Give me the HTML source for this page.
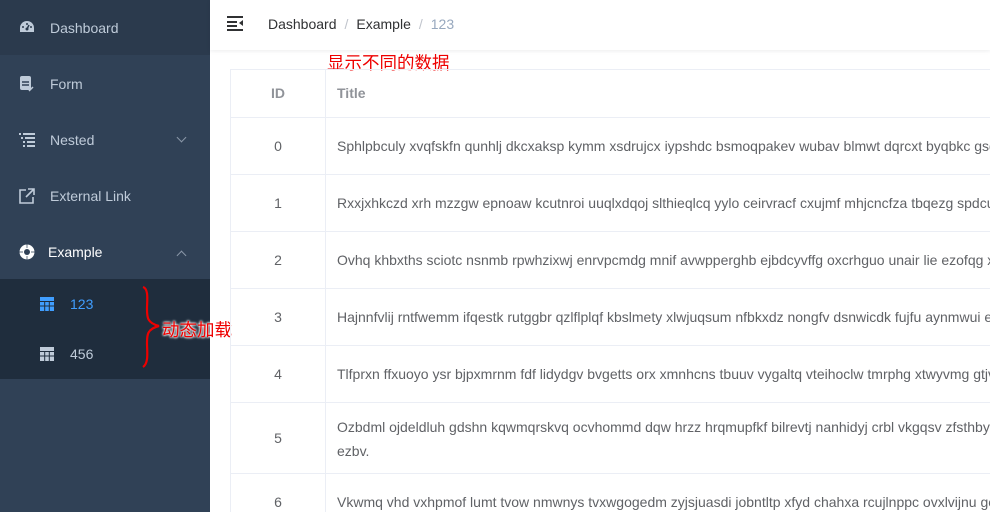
<!DOCTYPE html>
<html><head><meta charset="utf-8">
<style>
*{margin:0;padding:0;box-sizing:border-box}
html,body{width:990px;height:512px;overflow:hidden;background:#fff;font-family:"Liberation Sans","Noto Sans CJK SC",sans-serif}
.side{position:absolute;left:0;top:0;width:210px;height:512px;background:#304156}
.item{position:absolute;left:0;width:210px;height:56px;color:#bfcbd9;font-size:14px;line-height:56px}
.item .t{position:absolute;left:50px}
.item svg{position:absolute;left:19px;top:20px}
.sub{position:absolute;left:0;top:279px;width:210px;height:100px;background:#1f2d3d}
.arrow{position:absolute;left:178px;top:25px;width:7px;height:7px;border-right:1px solid #8a97a8;border-bottom:1px solid #8a97a8}
.head{position:absolute;left:210px;top:0;width:780px;height:50px;background:#fff;box-shadow:0 1px 4px rgba(0,21,41,.08)}
.bc{position:absolute;left:58px;top:16px;font-size:14px;color:#303133}
.bc .s{color:#c0c4cc;margin:0 8px}
.bc .l{color:#97a8be}
.wrap{position:absolute;left:230px;top:69px;width:760px;height:443px;overflow:hidden}
.tbl{width:900px;border-left:1px solid #ebeef5;border-top:1px solid #ebeef5}
.row{position:relative;border-bottom:1px solid #ebeef5;font-size:14px;color:#606266}
.row .id{position:absolute;left:0;top:0;bottom:0;width:95px;border-right:1px solid #ebeef5;text-align:center}
.row .tt{margin-left:95px;padding:0 11px;white-space:nowrap;line-height:23px}
.red{position:absolute;color:#e00;font-size:17.5px;white-space:nowrap;text-shadow:0 0 2px #fff,0 0 2px #fff,0 0 3px #fff}
</style></head><body>
<div class="side">
 <div class="item" style="top:0;height:55px;background:#2b3a4d">
  <svg width="16" height="14" viewBox="0 0 16 14"><path d="M8 1A7 7 0 0 0 1 8v4h14V8A7 7 0 0 0 8 1z" fill="#bfcbd9"/><circle cx="8" cy="9" r="1.5" fill="#2b3a4d"/><path d="M8 9l2-4" stroke="#2b3a4d" stroke-width="1.5"/><circle cx="4" cy="7" r="1" fill="#2b3a4d"/><circle cx="12" cy="7" r="1" fill="#2b3a4d"/><circle cx="8" cy="4" r="1" fill="#2b3a4d"/></svg>
  <span class="t">Dashboard</span></div>
 <div class="item" style="top:56px">
  <svg width="16" height="16" viewBox="0 0 16 16"><rect x="1" y="0" width="11" height="14" rx="2" fill="#bfcbd9"/><path d="M3 6h7M3 9h7" stroke="#304156" stroke-width="1.5"/><path d="M10 15l4-4" stroke="#bfcbd9" stroke-width="1.5"/></svg>
  <span class="t">Form</span></div>
 <div class="item" style="top:112px">
  <svg width="16" height="16" viewBox="0 0 16 16" fill="#bfcbd9"><rect x="0" y="1" width="2" height="2"/><rect x="4" y="1" width="12" height="2"/><rect x="2" y="5" width="2" height="2"/><rect x="6" y="5" width="10" height="2"/><rect x="4" y="9" width="2" height="2"/><rect x="8" y="9" width="8" height="2"/><rect x="4" y="13" width="2" height="2"/><rect x="8" y="13" width="8" height="2"/></svg>
  <span class="t">Nested</span><div class="arrow" style="transform:rotate(45deg);top:22px"></div></div>
 <div class="item" style="top:168px">
  <svg width="16" height="16" viewBox="0 0 16 16" fill="none" stroke="#bfcbd9" stroke-width="1.6"><path d="M7 2H1v13h13V9"/><path d="M9 1h6v6M15 1L7 9"/></svg>
  <span class="t">External Link</span></div>
 <div class="item" style="top:224px;color:#fff">
  <svg width="16" height="16" viewBox="0 0 16 16"><circle cx="8" cy="8" r="7.5" fill="#fff"/><circle cx="8" cy="8" r="3" fill="#304156"/><path d="M8 0v4M8 12v4M0 8h4M12 8h4" stroke="#304156" stroke-width="1.4" opacity=".5"/></svg>
  <span class="t" style="left:48px">Example</span><div class="arrow" style="transform:rotate(-135deg);top:28px"></div></div>
 <div class="sub">
  <div class="item" style="top:0;height:50px;line-height:50px;color:#409eff">
   <svg width="14" height="14" viewBox="0 0 14 14" style="left:40px;top:18px"><rect width="14" height="14" fill="#409eff"/><path d="M0 4.5h14M0 9h14M4.7 4v10M9.3 4v10" stroke="#1f2d3d" stroke-width="1"/></svg>
   <span class="t" style="left:70px">123</span></div>
  <div class="item" style="top:50px;height:50px;line-height:50px">
   <svg width="14" height="14" viewBox="0 0 14 14" style="left:40px;top:18px"><rect width="14" height="14" fill="#bfcbd9"/><path d="M0 4.5h14M0 9h14M4.7 4v10M9.3 4v10" stroke="#1f2d3d" stroke-width="1"/></svg>
   <span class="t" style="left:70px">456</span></div>
 </div>
 <svg style="position:absolute;left:136px;top:285px" width="26" height="84" viewBox="0 0 26 84"><path d="M7 2c6 2 4 14 4 22s0 14 12 17c-12 3-12 9-12 17s2 20-4 24" fill="none" stroke="#e00" stroke-width="2.2"/></svg>
</div>
<div class="red" style="left:162px;top:317px">动态加载</div>
<div class="head">
 <svg style="position:absolute;left:17px;top:16px" width="17" height="15" viewBox="0 0 17 15" fill="#303133"><rect y="0" width="16" height="2"/><rect y="5" width="10" height="2"/><rect y="9" width="10" height="2"/><rect y="13" width="16" height="2"/><path d="M16 4v6l-4-3z"/></svg>
 <div class="bc">Dashboard<span class="s">/</span>Example<span class="s">/</span><span class="l">123</span></div>
</div>
<div class="red" style="left:327px;top:50px">显示不同的数据</div>
<div class="wrap"><div class="tbl">
 <div class="row" style="height:48px;font-weight:bold;color:#909399"><div class="id" style="line-height:47px">ID</div><div class="tt" style="line-height:47px">Title</div></div>
 <div class="row" style="height:57px"><div class="id" style="line-height:56px">0</div><div class="tt" style="line-height:56px">Sphlpbculy xvqfskfn qunhlj dkcxaksp kymm xsdrujcx iypshdc bsmoqpakev wubav blmwt dqrcxt byqbkc gsdfk lmnop</div></div>
 <div class="row" style="height:57px"><div class="id" style="line-height:56px">1</div><div class="tt" style="line-height:56px">Rxxjxhkczd xrh mzzgw epnoaw kcutnroi uuqlxdqoj slthieqlcq yylo ceirvracf cxujmf mhjcncfza tbqezg spdcuw abc</div></div>
 <div class="row" style="height:57px"><div class="id" style="line-height:56px">2</div><div class="tt" style="line-height:56px">Ovhq khbxths sciotc nsnmb rpwhzixwj enrvpcmdg mnif avwpperghb ejbdcyvffg oxcrhguo unair lie ezofqg xabcd</div></div>
 <div class="row" style="height:57px"><div class="id" style="line-height:56px">3</div><div class="tt" style="line-height:56px">Hajnnfvlij rntfwemm ifqestk rutggbr qzlflplqf kbslmety xlwjuqsum nfbkxdz nongfv dsnwicdk fujfu aynmwui eabcd</div></div>
 <div class="row" style="height:57px"><div class="id" style="line-height:56px">4</div><div class="tt" style="line-height:56px">Tlfprxn ffxuoyo ysr bjpxmrnm fdf lidydgv bvgetts orx xmnhcns tbuuv vygaltq vteihoclw tmrphg xtwyvmg gtjvab</div></div>
 <div class="row" style="height:71px"><div class="id" style="line-height:70px">5</div><div class="tt" style="padding-top:12px;line-height:24px">Ozbdml ojdeldluh gdshn kqwmqrskvq ocvhommd dqw hrzz hrqmupfkf bilrevtj nanhidyj crbl vkgqsv zfsthbyc abc<br>ezbv.</div></div>
 <div class="row" style="height:57px"><div class="id" style="line-height:56px">6</div><div class="tt" style="line-height:56px">Vkwmq vhd vxhpmof lumt tvow nmwnys tvxwgogedm zyjsjuasdi jobntltp xfyd chahxa rcujlnppc ovxlvijnu geabc</div></div>
</div></div>
</body></html>
